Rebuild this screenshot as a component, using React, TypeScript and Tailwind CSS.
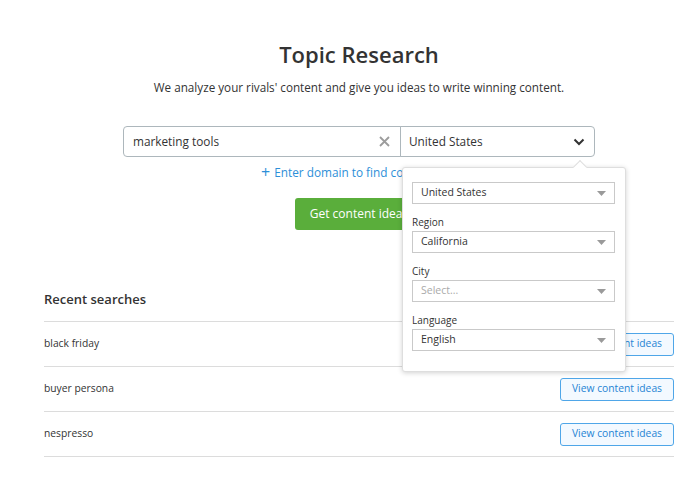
import React from "react";

const font = { fontFamily: '"Open Sans", "Noto Sans", Arial, sans-serif' };

function SmallSelect({ value, placeholder }: { value?: string; placeholder?: string }) {
  return (
    <div className="flex h-[22px] w-[203px] items-center justify-between border border-[#c9c9c9] bg-white pl-[8px] pr-[8px]">
      <span className={value ? "text-[10.5px] text-[#333]" : "text-[10.5px] text-[#aaa]"}>{value ?? placeholder}</span>
      <svg width="9" height="5" viewBox="0 0 9 5"><path d="M0 0 L9 0 L4.5 5 Z" fill="#9a9a9a" /></svg>
    </div>
  );
}

function Row({ label }: { label: string }) {
  return (
    <div className="flex h-[45px] items-center justify-between border-b border-[#dcdcdc]">
      <span className="text-[10.3px] text-[#333]">{label}</span>
      <button className="flex h-[23px] w-[114px] items-center justify-center rounded-[3px] border border-[#4fa6e8] bg-[#f3f9ff] text-[10.3px] text-[#1f84d4]">
        View content ideas
      </button>
    </div>
  );
}

export default function App() {
  return (
    <div className="relative h-[481px] w-[697px] overflow-hidden bg-white text-[#333]" style={font}>
      <div className="ml-[44px] flex w-[630px] flex-col items-center pt-[39px]">
        <h1 className="text-[22px] font-semibold leading-[30px] text-[#333]">Topic Research</h1>
        <p className="mt-[10px] text-[11.7px] leading-[16px] text-[#333]">
          We analyze your rivals' content and give you ideas to write winning content.
        </p>

        <div className="mt-[31px] flex">
          <div className="flex h-[31px] w-[278px] items-center justify-between rounded-l-[4px] border border-[#adb7bc] pl-[9px] pr-[10px]">
            <span className="text-[11.8px] text-[#333]">marketing tools</span>
            <svg width="11" height="11" viewBox="0 0 11 11">
              <path d="M1 1 L10 10 M10 1 L1 10" stroke="#9c9c9c" strokeWidth="1.8" />
            </svg>
          </div>
          <div className="relative -ml-px flex h-[31px] w-[195px] items-center justify-between rounded-r-[4px] border border-[#adb7bc] pl-[8px] pr-[9px]">
            <span className="text-[11.8px] text-[#333]">United States</span>
            <svg width="12" height="8" viewBox="0 0 12 8">
              <path d="M1.5 1.5 L6 6 L10.5 1.5" stroke="#333" strokeWidth="2" fill="none" />
            </svg>

            <div className="absolute left-[1px] top-[40px] z-10 w-[224px] rounded-[3px] border border-[#dedede] bg-white pb-[20px] pl-[9px] pt-[14px] shadow-[0_1px_5px_rgba(0,0,0,0.18)]">
              <div className="absolute -top-[6px] left-[172px] h-[10px] w-[10px] rotate-45 border-l border-t border-[#dedede] bg-white" />
              <SmallSelect value="United States" />
              <div className="mt-[10px] text-[10px] leading-[17px] text-[#333]">Region</div>
              <SmallSelect value="California" />
              <div className="mt-[10px] text-[10px] leading-[17px] text-[#333]">City</div>
              <SmallSelect placeholder="Select..." />
              <div className="mt-[10px] text-[10px] leading-[17px] text-[#333]">Language</div>
              <SmallSelect value="English" />
            </div>
          </div>
        </div>

        <div className="mt-[7px] flex items-center text-[11.8px] leading-[16px] text-[#2d8fd8]">
          <span className="mr-[4px] text-[16px] leading-[16px]">+</span>
          <span>Enter domain to find competitors</span>
        </div>

        <button className="mt-[18px] flex h-[32px] w-[128px] items-center justify-center rounded-[3px] bg-[#5aae3b] text-[12px] text-white">
          Get content ideas
        </button>

        <div className="mt-[59px] w-full">
          <div className="flex items-center border-b border-[#dcdcdc] pb-[12px] leading-[20px]">
            <span className="text-[13px] font-semibold text-[#333]">Recent searches</span>
          </div>
          <Row label="black friday" />
          <Row label="buyer persona" />
          <Row label="nespresso" />
        </div>
      </div>
    </div>
  );
}
